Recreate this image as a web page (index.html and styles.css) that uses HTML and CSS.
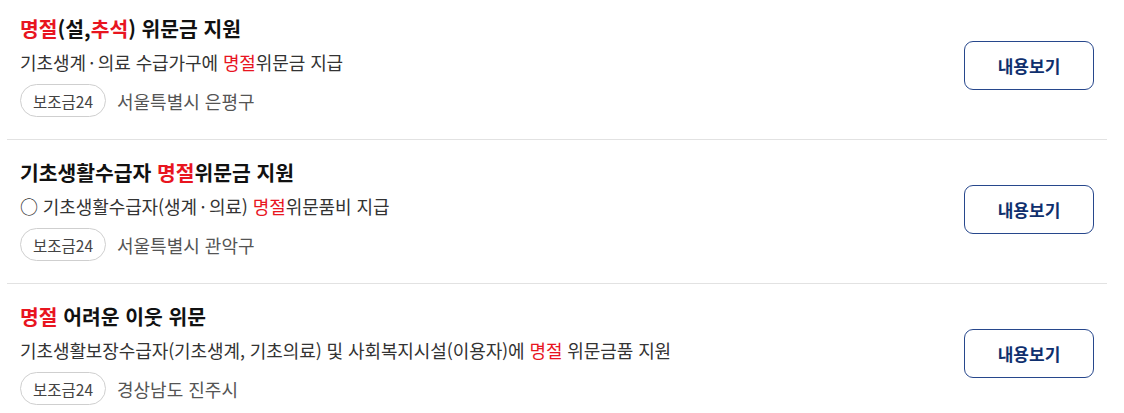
FILE: index.html
```html
<!DOCTYPE html>
<html lang="ko">
<head>
<meta charset="utf-8">
<title>명절 위문금 지원</title>
<link rel="stylesheet" href="styles.css">
</head>
<body>
<ul class="list">
  <li class="item">
    <div class="info">
      <h3 class="title"><span class="hl">명절</span>(설,<span class="hl">추석</span>) 위문금 지원</h3>
      <p class="desc">기초생계<span class="dot">·</span>의료 수급가구에 <span class="hl">명절</span>위문금 지급</p>
      <div class="meta"><span class="tag">보조금24</span><span class="place">서울특별시 은평구</span></div>
    </div>
    <a class="btn" href="#">내용보기</a>
  </li>
  <li class="item">
    <div class="info">
      <h3 class="title">기초생활수급자 <span class="hl">명절</span>위문금 지원</h3>
      <p class="desc">○ 기초생활수급자(생계<span class="dot">·</span>의료) <span class="hl">명절</span>위문품비 지급</p>
      <div class="meta"><span class="tag">보조금24</span><span class="place">서울특별시 관악구</span></div>
    </div>
    <a class="btn" href="#">내용보기</a>
  </li>
  <li class="item">
    <div class="info">
      <h3 class="title"><span class="hl">명절</span> 어려운 이웃 위문</h3>
      <p class="desc">기초생활보장수급자(기초생계, 기초의료) 및 사회복지시설(이용자)에 <span class="hl">명절</span> 위문금품 지원</p>
      <div class="meta"><span class="tag">보조금24</span><span class="place">경상남도 진주시</span></div>
    </div>
    <a class="btn" href="#">내용보기</a>
  </li>
</ul>
</body>
</html>
```
FILE: styles.css
```css
* { box-sizing: border-box; }
html, body { margin: 0; padding: 0; background: #fff; }
body {
  font-family: "Noto Sans CJK KR", "Noto Sans", sans-serif;
  color: #222;
}
.list {
  list-style: none;
  margin: -4px 0 0 0;
  padding: 0 17px 0 7px;
}
.item {
  display: flex;
  align-items: center;
  justify-content: space-between;
  padding: 18px 13px 22px 13px;
  border-bottom: 1px solid #e2e2e2;
}
.info { display: flex; flex-direction: column; }
.title {
  margin: 0;
  font-size: 20.4px;
  line-height: 28px;
  font-weight: 700;
  color: #111;
}
.hl { color: #e8151f; }
.desc {
  margin: 8px 0 0 0;
  font-size: 18px;
  line-height: 24px;
  color: #333;
  letter-spacing: -0.1px;
}
.dot { padding: 0 3.5px; }
.meta {
  display: flex;
  align-items: center;
  gap: 11px;
  margin-top: 10px;
}
.tag {
  display: inline-flex;
  align-items: center;
  height: 33px;
  padding: 0 12px;
  border: 1px solid #cfcfcf;
  border-radius: 17px;
  font-size: 15.5px;
  color: #444;
}
.place {
  font-size: 18px;
  color: #555;
}
.btn {
  display: flex;
  align-items: center;
  justify-content: center;
  width: 130px;
  height: 49px;
  border: 1px solid #27478c;
  border-radius: 9px;
  font-size: 17px;
  font-weight: 700;
  color: #0f2f6e;
  text-decoration: none;
  flex-shrink: 0;
}
```
